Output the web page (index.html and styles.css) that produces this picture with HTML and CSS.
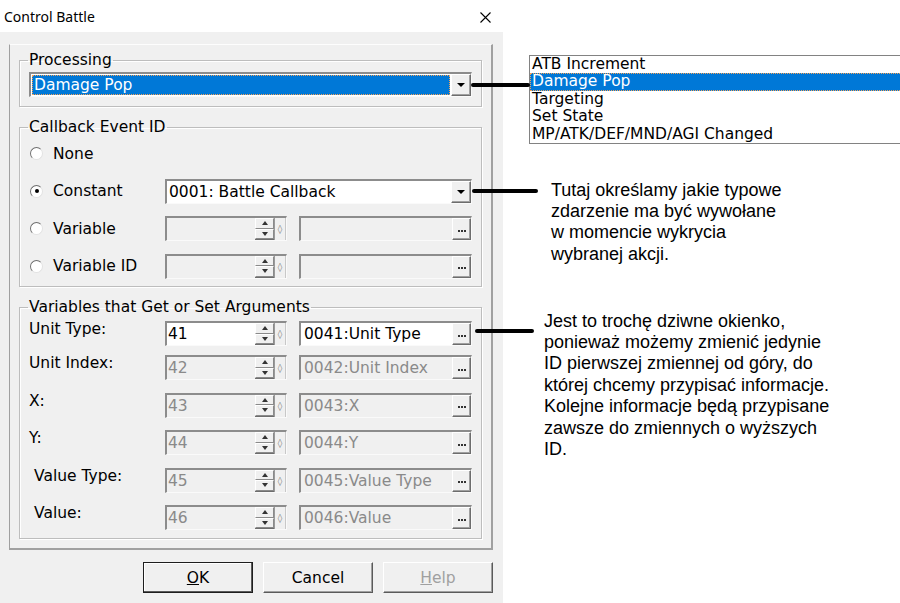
FILE: index.html
```html
<!DOCTYPE html>
<html lang="pl">
<head>
    <meta charset="UTF-8">
    <title>Control Battle</title>
    <link rel="stylesheet" href="styles.css">
</head>
<body>

<div class="screen">

    <div class="dialog">
        <div class="titlebar">
            <span class="title">Control Battle</span>
            <svg class="close" width="11" height="11" viewBox="0 0 11 11">
                <path d="M0.5 0.5 L10.5 10.5 M10.5 0.5 L0.5 10.5" stroke="#000" stroke-width="1.1" fill="none"/>
            </svg>
        </div>

        <div class="client">
            <div class="panel">

                <fieldset class="group group-processing">
                    <legend>Processing</legend>
                    <div class="combo">
                        <div class="combo-value selected"><span>Damage Pop</span></div>
                        <span class="drop"><i class="tri-down"></i></span>
                    </div>
                </fieldset>

                <fieldset class="group">
                    <legend>Callback Event ID</legend>
                    <div class="row">
                        <label class="radio"><span class="radio-mark"></span>None</label>
                    </div>
                    <div class="row">
                        <label class="radio"><span class="radio-mark checked"></span>Constant</label>
                        <div class="combo combo-wide">
                            <div class="combo-value">0001: Battle Callback</div>
                            <span class="drop"><i class="tri-down"></i></span>
                        </div>
                    </div>
                    <div class="row">
                        <label class="radio"><span class="radio-mark"></span>Variable</label>
                        <div class="spin">
                            <span class="value"></span>
                            <span class="updown"><span><i class="tri-up"></i></span><span><i class="tri-down"></i></span></span>
                            <span class="nudge">◊</span>
                        </div>
                        <div class="textbox">
                            <span class="value"></span>
                            <span class="dots"><svg width="8" height="2"><rect x="0" y="0" width="2" height="2"/><rect x="3" y="0" width="2" height="2"/><rect x="6" y="0" width="2" height="2"/></svg></span>
                        </div>
                    </div>
                    <div class="row">
                        <label class="radio"><span class="radio-mark"></span>Variable ID</label>
                        <div class="spin">
                            <span class="value"></span>
                            <span class="updown"><span><i class="tri-up"></i></span><span><i class="tri-down"></i></span></span>
                            <span class="nudge">◊</span>
                        </div>
                        <div class="textbox">
                            <span class="value"></span>
                            <span class="dots"><svg width="8" height="2"><rect x="0" y="0" width="2" height="2"/><rect x="3" y="0" width="2" height="2"/><rect x="6" y="0" width="2" height="2"/></svg></span>
                        </div>
                    </div>
                </fieldset>

                <fieldset class="group group-vars">
                    <legend>Variables that Get or Set Arguments</legend>
                    <div class="row">
                        <span class="label">Unit Type:</span>
                        <div class="spin on">
                            <span class="value">41</span>
                            <span class="updown"><span><i class="tri-up"></i></span><span><i class="tri-down"></i></span></span>
                            <span class="nudge">◊</span>
                        </div>
                        <div class="textbox on">
                            <span class="value">0041:Unit Type</span>
                            <span class="dots"><svg width="8" height="2"><rect x="0" y="0" width="2" height="2"/><rect x="3" y="0" width="2" height="2"/><rect x="6" y="0" width="2" height="2"/></svg></span>
                        </div>
                    </div>
                    <div class="row tight">
                        <span class="label">Unit Index:</span>
                        <div class="spin">
                            <span class="value">42</span>
                            <span class="updown"><span><i class="tri-up"></i></span><span><i class="tri-down"></i></span></span>
                            <span class="nudge">◊</span>
                        </div>
                        <div class="textbox">
                            <span class="value">0042:Unit Index</span>
                            <span class="dots"><svg width="8" height="2"><rect x="0" y="0" width="2" height="2"/><rect x="3" y="0" width="2" height="2"/><rect x="6" y="0" width="2" height="2"/></svg></span>
                        </div>
                    </div>
                    <div class="row">
                        <span class="label">X:</span>
                        <div class="spin">
                            <span class="value">43</span>
                            <span class="updown"><span><i class="tri-up"></i></span><span><i class="tri-down"></i></span></span>
                            <span class="nudge">◊</span>
                        </div>
                        <div class="textbox">
                            <span class="value">0043:X</span>
                            <span class="dots"><svg width="8" height="2"><rect x="0" y="0" width="2" height="2"/><rect x="3" y="0" width="2" height="2"/><rect x="6" y="0" width="2" height="2"/></svg></span>
                        </div>
                    </div>
                    <div class="row">
                        <span class="label">Y:</span>
                        <div class="spin">
                            <span class="value">44</span>
                            <span class="updown"><span><i class="tri-up"></i></span><span><i class="tri-down"></i></span></span>
                            <span class="nudge">◊</span>
                        </div>
                        <div class="textbox">
                            <span class="value">0044:Y</span>
                            <span class="dots"><svg width="8" height="2"><rect x="0" y="0" width="2" height="2"/><rect x="3" y="0" width="2" height="2"/><rect x="6" y="0" width="2" height="2"/></svg></span>
                        </div>
                    </div>
                    <div class="row">
                        <span class="label indent">Value Type:</span>
                        <div class="spin">
                            <span class="value">45</span>
                            <span class="updown"><span><i class="tri-up"></i></span><span><i class="tri-down"></i></span></span>
                            <span class="nudge">◊</span>
                        </div>
                        <div class="textbox">
                            <span class="value">0045:Value Type</span>
                            <span class="dots"><svg width="8" height="2"><rect x="0" y="0" width="2" height="2"/><rect x="3" y="0" width="2" height="2"/><rect x="6" y="0" width="2" height="2"/></svg></span>
                        </div>
                    </div>
                    <div class="row">
                        <span class="label indent">Value:</span>
                        <div class="spin">
                            <span class="value">46</span>
                            <span class="updown"><span><i class="tri-up"></i></span><span><i class="tri-down"></i></span></span>
                            <span class="nudge">◊</span>
                        </div>
                        <div class="textbox">
                            <span class="value">0046:Value</span>
                            <span class="dots"><svg width="8" height="2"><rect x="0" y="0" width="2" height="2"/><rect x="3" y="0" width="2" height="2"/><rect x="6" y="0" width="2" height="2"/></svg></span>
                        </div>
                    </div>
                </fieldset>

            </div>

            <div class="buttons">
                <button class="btn btn-default"><u>O</u>K</button>
                <button class="btn">Cancel</button>
                <button class="btn" disabled><u>H</u>elp</button>
            </div>
        </div>
    </div>

    <div class="notes">
        <ul class="listbox">
            <li>ATB Increment</li>
            <li class="selected"><span>Damage Pop</span></li>
            <li>Targeting</li>
            <li>Set State</li>
            <li>MP/ATK/DEF/MND/AGI Changed</li>
        </ul>

        <p class="note note-callback">
            Tutaj określamy jakie typowe<br>
            zdarzenie ma być wywołane<br>
            w momencie wykrycia<br>
            wybranej akcji.
        </p>

        <p class="note note-args">
            Jest to trochę dziwne okienko,<br>
            ponieważ możemy zmienić jedynie<br>
            ID pierwszej zmiennej od góry, do<br>
            której chcemy przypisać informacje.<br>
            Kolejne informacje będą przypisane<br>
            zawsze do zmiennych o wyższych<br>
            ID.
        </p>
    </div>

    <!-- strzałki adnotacji -->
    <span class="arrow arrow-processing"></span>
    <span class="arrow arrow-callback"></span>
    <span class="arrow arrow-args"></span>

</div>

</body>
</html>
```

FILE: styles.css
```css
body {
    margin: 0;
    background-color: #fff;
    font-family: "DejaVu Sans", Verdana, sans-serif;
    font-size: 15.5px;
    color: #000;
}

.screen {
    position: relative;
    display: flex;
    width: 900px;
    height: 603px;
    overflow: hidden;
}

/* okno dialogowe */
.dialog {
    flex: none;
    width: 503px;
    display: flex;
    flex-direction: column;
}

.titlebar {
    height: 32px;
    box-sizing: border-box;
    padding: 0 12px 0 4px;
    display: flex;
    align-items: center;
    justify-content: space-between;
    background-color: #fff;
    font-family: "Noto Sans", sans-serif;
    font-size: 14px;
}

.close {
    margin-top: 2px;
}

.client {
    flex: 1;
    background-color: #f0f0f0;
    padding: 12px 10px 0 9px;
}

.panel {
    border-style: solid;
    border-width: 1px 2px 2px 1px;
    border-color: #fdfdfd #a0a0a0 #a0a0a0 #a0a0a0;
    padding: 7px 9px 9px 9px;
}

.group {
    margin: 0;
    min-width: 0;
    border: 1px solid #bdbdbd;
    box-shadow: inset 1px 1px #fff, 1px 1px #fff;
    padding: 5px 9px 7.5px 9px;
}

.group + .group {
    margin-top: 12px;
}

.group legend {
    padding: 0 1px;
    margin-left: -1px;
    line-height: 17px;
}

.group-processing {
    padding-top: 3px;
    padding-bottom: 9px;
}

.group-vars {
    padding-bottom: 8px;
}

.row {
    display: flex;
    align-items: center;
    height: 25px;
}

.row + .row {
    margin-top: 12.5px;
}

.group-vars .row {
    align-items: flex-start;
}

.group-vars .row.tight {
    margin-top: 9px;
}

.label {
    flex: 0 0 136px;
    box-sizing: border-box;
    line-height: 17px;
}

.label.indent {
    padding-left: 5px;
}

.radio {
    flex: 0 0 135px;
    margin-left: 1px;
    display: flex;
    align-items: center;
    gap: 10px;
    height: 25px;
}

.radio-mark {
    position: relative;
    width: 13px;
    height: 13px;
    box-sizing: border-box;
    border-radius: 50%;
    border: 1px solid;
    border-color: #6f6f6f #e2e2e2 #e2e2e2 #6f6f6f;
    background-color: #fff;
}

.radio-mark.checked::after {
    content: "";
    position: absolute;
    left: 3.5px;
    top: 3.5px;
    width: 4px;
    height: 4px;
    border-radius: 50%;
    background-color: #000;
}

/* pola edycji */
.combo,
.spin,
.textbox {
    height: 25px;
    box-sizing: border-box;
    display: flex;
    border-style: solid;
    border-width: 2px 1px 1px 2px;
    border-color: #8c8c8c #fafafa #fafafa #8c8c8c;
    background-color: #f0f0f0;
}

.combo {
    background-color: #fff;
}

.combo-wide {
    width: 307px;
}

.combo-value {
    flex: 1;
    padding-left: 2px;
    line-height: 22px;
    white-space: nowrap;
}

.combo-value.selected {
    margin: 1px 1px 1px 1px;
    padding-left: 2px;
    line-height: 20px;
    background-color: #0078d7;
    color: #fff;
    outline: 1px dotted #f3a35a;
    outline-offset: -1px;
}

.drop {
    width: 20px;
    box-sizing: border-box;
    display: flex;
    align-items: center;
    justify-content: center;
    border: 1px solid;
    border-color: #fff #6d6d6d #6d6d6d #fff;
    box-shadow: inset -1px -1px #a0a0a0;
    background-color: #f0f0f0;
}

.tri-down,
.tri-up {
    display: block;
    width: 0;
    height: 0;
    border-left: 3.5px solid transparent;
    border-right: 3.5px solid transparent;
}

.tri-down {
    border-top: 4px solid #000;
}

.tri-up {
    border-bottom: 4px solid #000;
}

.drop .tri-down {
    border-left-width: 4px;
    border-right-width: 4px;
    border-top-width: 4.5px;
}

.spin {
    width: 122px;
}

.textbox {
    width: 173px;
    margin-left: 12px;
}

.spin.on,
.textbox.on {
    background-color: #fff;
}

.spin .value,
.textbox .value {
    flex: 1;
    line-height: 22px;
    color: #8a8a8a;
    white-space: nowrap;
    overflow: hidden;
}

.spin .value {
    padding-left: 1px;
}

.textbox .value {
    padding-left: 3px;
}

.on .value {
    color: #000;
}

.updown {
    width: 19px;
    display: flex;
    flex-direction: column;
    border-bottom: 1px solid #6d6d6d;
}

.updown span {
    flex: 1;
    display: flex;
    align-items: center;
    justify-content: center;
    border: 1px solid;
    border-color: #fff #8a8a8a #8a8a8a #fff;
    background-color: #f0f0f0;
}

.updown .tri-up,
.updown .tri-down {
    border-left-width: 3px;
    border-right-width: 3px;
    border-top-color: #333;
    border-bottom-color: #333;
}

.nudge {
    width: 12px;
    box-sizing: border-box;
    border-left: 1px solid #9a9a9a;
    border-right: 1px solid #c8c8c8;
    background-color: #f0f0f0;
    display: flex;
    align-items: center;
    justify-content: center;
    font-size: 9px;
    color: #777;
}

.dots {
    width: 19px;
    box-sizing: border-box;
    display: flex;
    align-items: center;
    justify-content: center;
    border: 1px solid;
    border-color: #fff #6d6d6d #6d6d6d #fff;
    box-shadow: inset -1px -1px #a0a0a0;
    background-color: #f0f0f0;
    fill: #333;
}

.dots svg {
    margin-top: 3px;
}

/* przyciski */
.buttons {
    display: flex;
    justify-content: flex-end;
    gap: 10px;
    margin-top: 12px;
}

.btn {
    width: 110px;
    height: 31px;
    box-sizing: border-box;
    font: inherit;
    color: #000;
    background-color: #f0f0f0;
    border: 1px solid;
    border-color: #fff #5a5a5a #5a5a5a #fff;
    box-shadow: inset -1px -1px #a0a0a0;
    padding: 0;
}

.btn-default {
    border: 1px solid #1e1e1e;
    box-shadow: inset -1px -1px #5a5a5a, inset 1px 1px #fff;
}

.btn:disabled {
    color: #a0a0a0;
}

/* prawa strona z opisami */
.notes {
    flex: 1;
}

.listbox {
    list-style: none;
    margin: 55px 0 0 26px;
    padding: 0;
    width: 400px;
    border: 1px solid #828282;
    border-right: none;
}

.listbox li {
    padding-left: 2px;
    line-height: 17.4px;
    white-space: nowrap;
}

.listbox li.selected {
    background-color: #0078d7;
    color: #fff;
    outline: 1px dotted #f3a35a;
    outline-offset: -1px;
}

.note {
    margin: 0;
    font-family: "Liberation Sans", Arial, sans-serif;
    font-size: 18px;
    line-height: 21.4px;
    white-space: nowrap;
}

.note-callback {
    margin: 35.5px 0 0 48px;
}

.note-args {
    margin: 45.4px 0 0 41px;
}

.arrow {
    position: absolute;
    height: 4px;
    background-color: #000;
    border-radius: 2px;
}

.arrow-processing {
    left: 471px;
    top: 83px;
    width: 59px;
}

.arrow-callback {
    left: 472px;
    top: 189px;
    width: 66px;
}

.arrow-args {
    left: 475px;
    top: 329px;
    width: 59px;
}
```
